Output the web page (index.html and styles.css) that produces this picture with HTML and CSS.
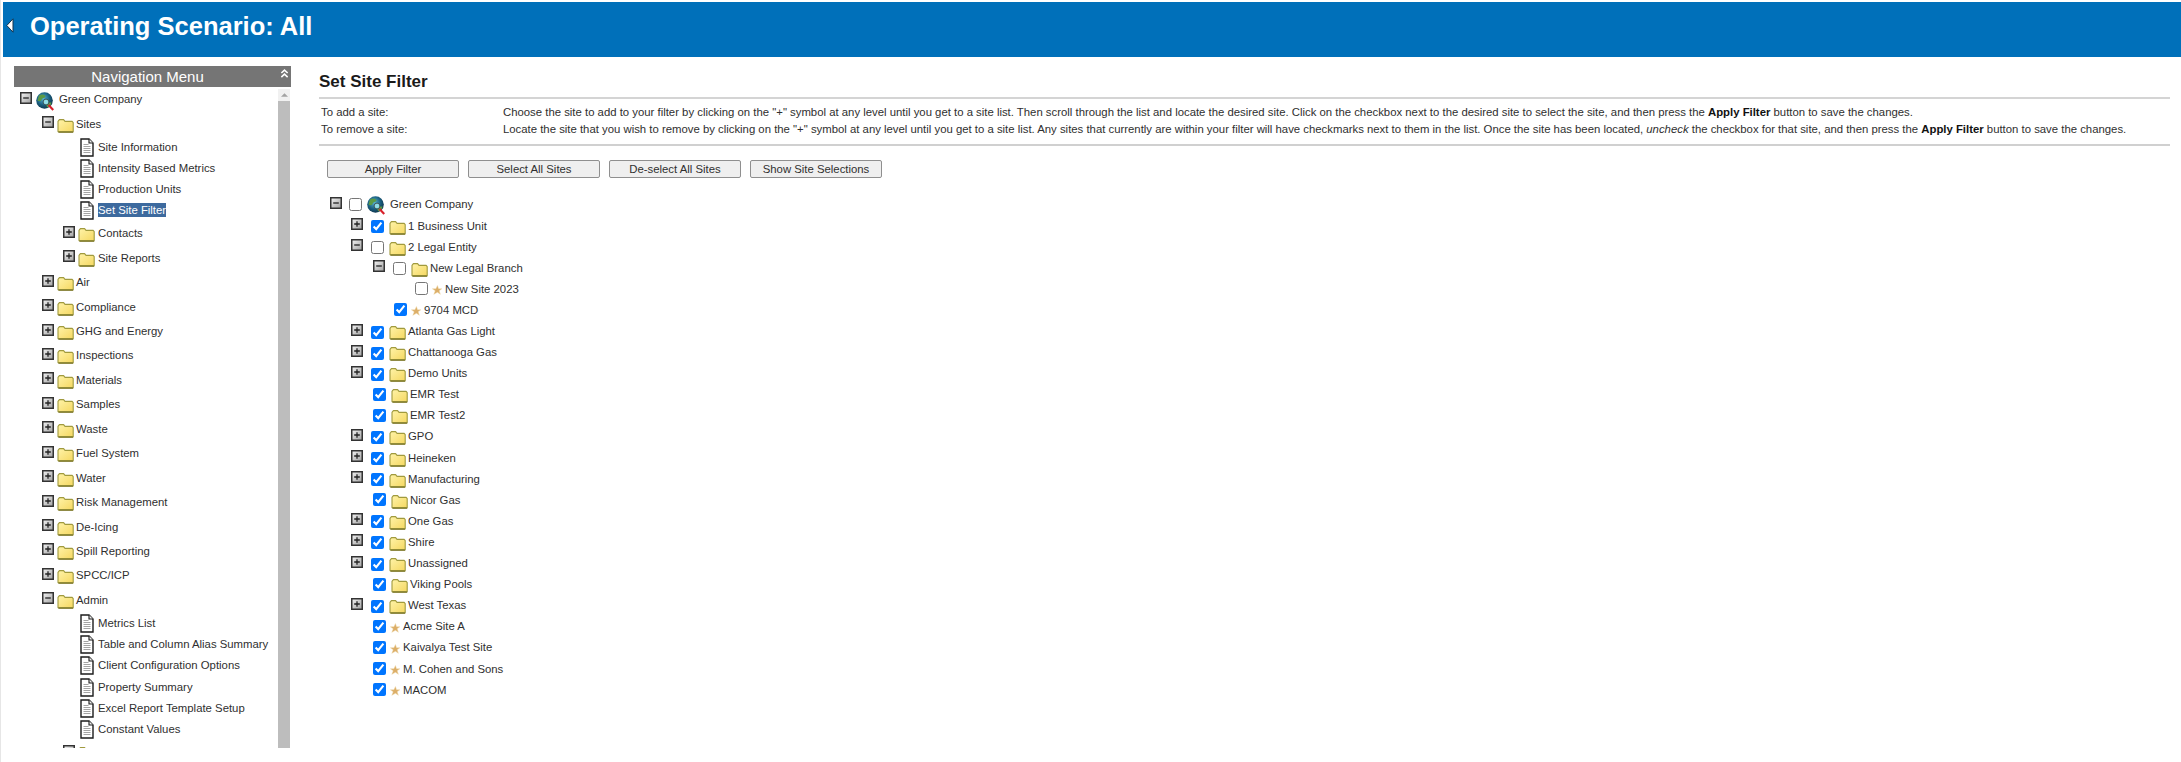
FILE: index.html
```html
<!DOCTYPE html>
<html lang="en">
<head>
<meta charset="utf-8">
<title>Set Site Filter</title>
<link rel="stylesheet" href="styles.css">
</head>
<body>
<svg class="defs" width="0" height="0" aria-hidden="true">
  <defs>
    <linearGradient id="gx" x1="0" y1="0" x2="1" y2="1"><stop offset="0" stop-color="#f4f4f4"/><stop offset="1" stop-color="#a0a0a0"/></linearGradient>
    <linearGradient id="gf" x1="0" y1="0" x2="1" y2="1"><stop offset="0" stop-color="#fff3a8"/><stop offset="1" stop-color="#f5d862"/></linearGradient>
    <radialGradient id="gg" cx=".42" cy=".38" r=".7"><stop offset="0" stop-color="#58b4d4"/><stop offset=".55" stop-color="#1a5f80"/><stop offset="1" stop-color="#0c2a3e"/></radialGradient>
    <symbol id="i-minus" viewBox="0 0 12 12"><rect x=".75" y=".75" width="10.5" height="10.5" fill="url(#gx)" stroke="#333" stroke-width="1.5"/><path d="M3.2 6h5.6" stroke="#222" stroke-width="1.3"/></symbol>
    <symbol id="i-plus" viewBox="0 0 12 12"><rect x=".75" y=".75" width="10.5" height="10.5" fill="url(#gx)" stroke="#333" stroke-width="1.5"/><path d="M3.2 6h5.6M6 3.2v5.6" stroke="#222" stroke-width="1.3"/></symbol>
    <symbol id="i-folder" viewBox="0 0 17 15"><path d="M1 13.6V3.400L2.400 1.600h4.200L8 3.400h7.200l1 1.200v9z" fill="url(#gf)" stroke="#a09a3e" stroke-width="1.1" stroke-linejoin="round"/><path d="M1.4 14.200h14.800" stroke="#7f7a2c" stroke-width="1.300"/></symbol>
    <symbol id="i-doc" viewBox="0 0 14 19"><path d="M1 1h8l4 4v13H1z" fill="#fff" stroke="#1c1c1c" stroke-width="1.4"/><path d="M9 1v4h4" fill="#eee" stroke="#1c1c1c" stroke-width="1.1"/><path d="M3.5 6.5h5M3.5 8.5h7M3.5 10.5h7M3.5 12.5h7M3.5 14.5h7" stroke="#a5a5a5" stroke-width="1.1"/></symbol>
    <symbol id="i-globe" viewBox="0 0 18 19"><circle cx="8.500" cy="8.500" r="8.300" fill="url(#gg)"/><path d="M3 3.500C6 1.500 9 2.500 9.500 4.500C9 6.500 6 5.500 5.500 8C5 9.500 2.500 9.500 1.500 8.500zM10.500 11c2-.8 3.500-.5 5-.5-.4 2.500-2 4.500-4 5-1-1-1.800-2.800-1-4.500z" fill="#5c9a45"/><path d="M12.500 13l4.800 5" stroke="#d8202a" stroke-width="2.200"/><circle cx="10" cy="10" r="2.900" fill="#8fdde6" stroke="#2f3a40" stroke-width=".8"/></symbol>
    <symbol id="i-star" viewBox="0 0 11 11"><path d="M6 .6l1.200 3.500 3.600.1-2.900 2.200 1.300 3.800L6 8.100 2 10.300l1.500-3.900L.4 4.200l3.900-.1z" fill="#dcae68" stroke="#eed6a6" stroke-width=".5"/></symbol>
  </defs>
</svg>

<div class="page">
  <header class="topbar">
    <svg class="back" viewBox="0 0 8 15" aria-hidden="true"><path d="M7 .8v13.400L.8 7.500z" fill="#fff" stroke="#15324a" stroke-width="1"/></svg>
    <h1 class="title">Operating Scenario: All</h1>
  </header>

  <div class="main">
    <aside class="sidebar">
      <div class="nav-head">
        <span>Navigation Menu</span>
        <svg class="collapse" viewBox="0 0 10 11" aria-hidden="true"><path d="M1.500 5L5 1.700l3.500 3.300M1.500 9.500L5 6.200l3.500 3.300" fill="none" stroke="#fff" stroke-width="1.700"/></svg>
      </div>
      <div class="nav-body">
        <div class="nav-tree">
          <div class="nrow lv0"><svg class="exp"><use href="#i-minus"/></svg><svg class="globe"><use href="#i-globe"/></svg><span class="t tg">Green Company</span></div>
          <div class="nrow lv1"><svg class="exp"><use href="#i-minus"/></svg><svg class="fold"><use href="#i-folder"/></svg><span class="t">Sites</span></div>
          <div class="drow"><svg class="doc"><use href="#i-doc"/></svg><span class="t">Site Information</span></div>
          <div class="drow"><svg class="doc"><use href="#i-doc"/></svg><span class="t">Intensity Based Metrics</span></div>
          <div class="drow"><svg class="doc"><use href="#i-doc"/></svg><span class="t">Production Units</span></div>
          <div class="drow"><svg class="doc"><use href="#i-doc"/></svg><span class="t selected">Set Site Filter</span></div>
          <div class="nrow lv2"><svg class="exp"><use href="#i-plus"/></svg><svg class="fold"><use href="#i-folder"/></svg><span class="t">Contacts</span></div>
          <div class="nrow lv2"><svg class="exp"><use href="#i-plus"/></svg><svg class="fold"><use href="#i-folder"/></svg><span class="t">Site Reports</span></div>
          <div class="nrow lv1"><svg class="exp"><use href="#i-plus"/></svg><svg class="fold"><use href="#i-folder"/></svg><span class="t">Air</span></div>
          <div class="nrow lv1"><svg class="exp"><use href="#i-plus"/></svg><svg class="fold"><use href="#i-folder"/></svg><span class="t">Compliance</span></div>
          <div class="nrow lv1"><svg class="exp"><use href="#i-plus"/></svg><svg class="fold"><use href="#i-folder"/></svg><span class="t">GHG and Energy</span></div>
          <div class="nrow lv1"><svg class="exp"><use href="#i-plus"/></svg><svg class="fold"><use href="#i-folder"/></svg><span class="t">Inspections</span></div>
          <div class="nrow lv1"><svg class="exp"><use href="#i-plus"/></svg><svg class="fold"><use href="#i-folder"/></svg><span class="t">Materials</span></div>
          <div class="nrow lv1"><svg class="exp"><use href="#i-plus"/></svg><svg class="fold"><use href="#i-folder"/></svg><span class="t">Samples</span></div>
          <div class="nrow lv1"><svg class="exp"><use href="#i-plus"/></svg><svg class="fold"><use href="#i-folder"/></svg><span class="t">Waste</span></div>
          <div class="nrow lv1"><svg class="exp"><use href="#i-plus"/></svg><svg class="fold"><use href="#i-folder"/></svg><span class="t">Fuel System</span></div>
          <div class="nrow lv1"><svg class="exp"><use href="#i-plus"/></svg><svg class="fold"><use href="#i-folder"/></svg><span class="t">Water</span></div>
          <div class="nrow lv1"><svg class="exp"><use href="#i-plus"/></svg><svg class="fold"><use href="#i-folder"/></svg><span class="t">Risk Management</span></div>
          <div class="nrow lv1"><svg class="exp"><use href="#i-plus"/></svg><svg class="fold"><use href="#i-folder"/></svg><span class="t">De-Icing</span></div>
          <div class="nrow lv1"><svg class="exp"><use href="#i-plus"/></svg><svg class="fold"><use href="#i-folder"/></svg><span class="t">Spill Reporting</span></div>
          <div class="nrow lv1"><svg class="exp"><use href="#i-plus"/></svg><svg class="fold"><use href="#i-folder"/></svg><span class="t">SPCC/ICP</span></div>
          <div class="nrow lv1"><svg class="exp"><use href="#i-minus"/></svg><svg class="fold"><use href="#i-folder"/></svg><span class="t">Admin</span></div>
          <div class="drow"><svg class="doc"><use href="#i-doc"/></svg><span class="t">Metrics List</span></div>
          <div class="drow"><svg class="doc"><use href="#i-doc"/></svg><span class="t">Table and Column Alias Summary</span></div>
          <div class="drow"><svg class="doc"><use href="#i-doc"/></svg><span class="t">Client Configuration Options</span></div>
          <div class="drow"><svg class="doc"><use href="#i-doc"/></svg><span class="t">Property Summary</span></div>
          <div class="drow"><svg class="doc"><use href="#i-doc"/></svg><span class="t">Excel Report Template Setup</span></div>
          <div class="drow"><svg class="doc"><use href="#i-doc"/></svg><span class="t">Constant Values</span></div>
          <div class="nrow lv2"><svg class="exp"><use href="#i-plus"/></svg><svg class="fold"><use href="#i-folder"/></svg><span class="t">Security</span></div>
        </div>
        <div class="scrollbar">
          <div class="sb-btn"><svg viewBox="0 0 8 4" aria-hidden="true"><path d="M0 4L4 0l4 4z" fill="#a3a3a3"/></svg></div>
          <div class="sb-thumb"></div>
        </div>
      </div>
    </aside>

    <main class="content">
      <h2 class="heading">Set Site Filter</h2>
      <div class="help">
        <div class="help-row"><span class="help-key">To add a site:</span><span>Choose the site to add to your filter by clicking on the "+" symbol at any level until you get to a site list. Then scroll through the list and locate the desired site. Click on the checkbox next to the desired site to select the site, and then press the <b>Apply Filter</b> button to save the changes.</span></div>
        <div class="help-row"><span class="help-key">To remove a site:</span><span>Locate the site that you wish to remove by clicking on the "+" symbol at any level until you get to a site list. Any sites that currently are within your filter will have checkmarks next to them in the list. Once the site has been located, <i>uncheck</i> the checkbox for that site, and then press the <b>Apply Filter</b> button to save the changes.</span></div>
      </div>
      <div class="actions">
        <button class="btn" type="button">Apply Filter</button>
        <button class="btn" type="button">Select All Sites</button>
        <button class="btn" type="button">De-select All Sites</button>
        <button class="btn" type="button">Show Site Selections</button>
      </div>
      <div class="site-tree">
        <div class="srow root"><svg class="exp"><use href="#i-minus"/></svg><input type="checkbox"><svg class="globe"><use href="#i-globe"/></svg><span class="t tg">Green Company</span></div>
        <div class="srow l1"><svg class="exp"><use href="#i-plus"/></svg><input type="checkbox" checked><svg class="fold"><use href="#i-folder"/></svg><span class="t">1 Business Unit</span></div>
        <div class="srow l1"><svg class="exp"><use href="#i-minus"/></svg><input type="checkbox"><svg class="fold"><use href="#i-folder"/></svg><span class="t">2 Legal Entity</span></div>
        <div class="srow l2"><svg class="exp"><use href="#i-minus"/></svg><input type="checkbox"><svg class="fold"><use href="#i-folder"/></svg><span class="t">New Legal Branch</span></div>
        <div class="srow leaf3"><input type="checkbox"><svg class="star"><use href="#i-star"/></svg><span class="t">New Site 2023</span></div>
        <div class="srow leaf2"><input type="checkbox" checked><svg class="star"><use href="#i-star"/></svg><span class="t">9704 MCD</span></div>
        <div class="srow l1"><svg class="exp"><use href="#i-plus"/></svg><input type="checkbox" checked><svg class="fold"><use href="#i-folder"/></svg><span class="t">Atlanta Gas Light</span></div>
        <div class="srow l1"><svg class="exp"><use href="#i-plus"/></svg><input type="checkbox" checked><svg class="fold"><use href="#i-folder"/></svg><span class="t">Chattanooga Gas</span></div>
        <div class="srow l1"><svg class="exp"><use href="#i-plus"/></svg><input type="checkbox" checked><svg class="fold"><use href="#i-folder"/></svg><span class="t">Demo Units</span></div>
        <div class="srow bare"><input type="checkbox" checked><svg class="fold"><use href="#i-folder"/></svg><span class="t">EMR Test</span></div>
        <div class="srow bare"><input type="checkbox" checked><svg class="fold"><use href="#i-folder"/></svg><span class="t">EMR Test2</span></div>
        <div class="srow l1"><svg class="exp"><use href="#i-plus"/></svg><input type="checkbox" checked><svg class="fold"><use href="#i-folder"/></svg><span class="t">GPO</span></div>
        <div class="srow l1"><svg class="exp"><use href="#i-plus"/></svg><input type="checkbox" checked><svg class="fold"><use href="#i-folder"/></svg><span class="t">Heineken</span></div>
        <div class="srow l1"><svg class="exp"><use href="#i-plus"/></svg><input type="checkbox" checked><svg class="fold"><use href="#i-folder"/></svg><span class="t">Manufacturing</span></div>
        <div class="srow bare"><input type="checkbox" checked><svg class="fold"><use href="#i-folder"/></svg><span class="t">Nicor Gas</span></div>
        <div class="srow l1"><svg class="exp"><use href="#i-plus"/></svg><input type="checkbox" checked><svg class="fold"><use href="#i-folder"/></svg><span class="t">One Gas</span></div>
        <div class="srow l1"><svg class="exp"><use href="#i-plus"/></svg><input type="checkbox" checked><svg class="fold"><use href="#i-folder"/></svg><span class="t">Shire</span></div>
        <div class="srow l1"><svg class="exp"><use href="#i-plus"/></svg><input type="checkbox" checked><svg class="fold"><use href="#i-folder"/></svg><span class="t">Unassigned</span></div>
        <div class="srow bare"><input type="checkbox" checked><svg class="fold"><use href="#i-folder"/></svg><span class="t">Viking Pools</span></div>
        <div class="srow l1"><svg class="exp"><use href="#i-plus"/></svg><input type="checkbox" checked><svg class="fold"><use href="#i-folder"/></svg><span class="t">West Texas</span></div>
        <div class="srow bare"><input type="checkbox" checked><svg class="star"><use href="#i-star"/></svg><span class="t">Acme Site A</span></div>
        <div class="srow bare"><input type="checkbox" checked><svg class="star"><use href="#i-star"/></svg><span class="t">Kaivalya Test Site</span></div>
        <div class="srow bare"><input type="checkbox" checked><svg class="star"><use href="#i-star"/></svg><span class="t">M. Cohen and Sons</span></div>
        <div class="srow bare"><input type="checkbox" checked><svg class="star"><use href="#i-star"/></svg><span class="t">MACOM</span></div>
      </div>
    </main>
  </div>
</div>
</body>
</html>
```
FILE: styles.css
```css
* { box-sizing: border-box; }
html, body { margin: 0; height: 100%; background: #fff; overflow: hidden; }
body { font-family: "Liberation Sans", Arial, sans-serif; font-size: 11.350px; color: #2f2f2f; }
.defs { position: absolute; }
svg { display: block; flex: none; }

.page { height: 762px; padding: 2px 0 0 2px; display: flex; flex-direction: column; border-left: 1px solid #e6e6e6; }

.topbar { height: 55px; background: #0070ba; display: flex; align-items: flex-start; padding: 14px 0 0 3px; flex: none; }
.back { width: 8px; height: 15px; margin-top: 2px; }
.title { margin: -4px 0 0 16px; font-size: 25.500px; line-height: 28px; font-weight: bold; color: #fff; }

.main { display: flex; flex: 1; min-height: 0; padding: 9px 11px 14px 11px; }

.sidebar { width: 277px; flex: none; display: flex; flex-direction: column; min-height: 0; }
.nav-head { height: 21px; background: #757575; color: #fff; font-size: 15px; line-height: 21px; display: flex; justify-content: center; padding-right: 10px; position: relative; flex: none; }
.collapse { position: absolute; right: 2px; top: 2px; width: 9px; height: 11px; }
.nav-body { flex: 1; min-height: 0; display: flex; }
.nav-tree { flex: 1; min-width: 0; overflow: hidden; }
.scrollbar { width: 12px; display: flex; flex-direction: column; margin-right: 1px; margin-top: 2px; flex: none; background: #f1f1f1; }
.sb-btn { height: 12px; display: flex; align-items: center; justify-content: center; }
.sb-btn svg { width: 7px; height: 4px; }
.sb-thumb { flex: 1; background: #bdbdbd; }

.nrow { height: 24.440px; display: flex; align-items: center; }
.lv0 { padding-left: 6px; }
.lv1 { padding-left: 28px; }
.lv2 { padding-left: 49px; }
.drow { height: 21.300px; display: flex; align-items: center; padding-left: 66px; }
.exp { width: 12px; height: 12px; margin-top: -3px; }
.nrow .exp + .fold { margin-left: 3px; margin-top: 3px; }
.nrow .exp + .globe { margin-left: 4px; margin-top: 5px; }
.fold { width: 17px; height: 15px; }
.globe { width: 18px; height: 19px; }
.doc { width: 14px; height: 19px; margin-top: 1px; }
.t { white-space: nowrap; line-height: 14px; }
.nrow .fold + .t { margin-left: 2px; }
.lv2 .fold + .t { margin-left: 3px; }
.nrow .tg { margin-left: 5px; }
.drow .t { margin-left: 4px; }
.selected { background: #3d6a9e; color: #fff; }

.content { flex: 1; min-width: 0; padding-left: 28px; }
.heading { margin: 0; font-size: 17px; line-height: 20px; font-weight: bold; color: #1a1a1a; padding-top: 6px; height: 33px; border-bottom: 2px solid #d4d4d4; }
.help { height: 47px; padding: 4.750px 0 0 2px; border-bottom: 2px solid #d0d0d0; }
.help-row { height: 17.500px; line-height: 17.500px; white-space: nowrap; display: flex; }
.help-key { width: 182px; flex: none; }
.help b { color: #111; }
.actions { display: flex; gap: 9px; padding: 14px 0 0 8px; }
.btn { width: 132px; height: 18px; padding: 0; font: 11.350px "Liberation Sans", Arial, sans-serif; color: #2f2f2f; background: #efefef; border: 1px solid #8f8f8f; border-radius: 2px; }
.site-tree { padding-top: 15px; }
.srow { height: 21.100px; display: flex; align-items: center; }
.srow input { width: 13px; height: 13px; margin: 0; flex: none; }
.srow.root { padding-left: 11px; height: 22px; }
.root input { margin-left: 7px; margin-top: 1px; }
.root .globe { margin-left: 5px; margin-top: 3px; }
.root .tg { margin-left: 5px; }
.l1 { padding-left: 32px; }
.l1 input, .l2 input { margin-left: 8px; margin-top: 2px; }
.l1 .fold, .l2 .fold { margin-left: 5px; margin-top: 3px; }
.l1 .t, .l2 .t, .bare .fold + .t { margin-left: 2px; }
.l2 { padding-left: 54px; }
.leaf3 { padding-left: 96px; }
.leaf2 { padding-left: 75px; }
.leaf3 .star, .leaf2 .star, .bare .star { margin-left: 4px; margin-top: 3px; }
.leaf3 .t, .leaf2 .t, .bare .star + .t { margin-left: 3px; }
.bare { padding-left: 54px; }
.bare .fold { margin-left: 5px; margin-top: 3px; }
.star { width: 10px; height: 10px; }
```
